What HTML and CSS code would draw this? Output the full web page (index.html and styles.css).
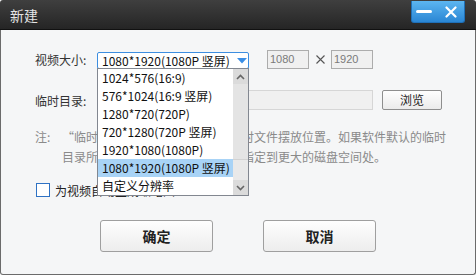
FILE: index.html
```html
<!DOCTYPE html>
<html lang="zh-CN">
<head>
<meta charset="utf-8">
<title>新建</title>
<link rel="stylesheet" href="styles.css">
</head>
<body>
<div class="win">
  <div class="titlebar">
    <span class="title">新建</span>
    <div class="ctrls">
      <span class="min"></span>
      <svg class="close" width="12" height="12" viewBox="0 0 12 12"><path d="M1.5 1.5 L10.5 10.5 M10.5 1.5 L1.5 10.5" stroke="#fff" stroke-width="2.2" stroke-linecap="round" fill="none"/></svg>
    </div>
  </div>
  <div class="body">
    <div class="row row-size">
      <span class="label">视频大小:</span>
      <div class="select-wrap">
        <div class="select">
          <span>1080*1920(1080P 竖屏)</span>
          <svg class="arrow" width="10" height="6" viewBox="0 0 10 6"><polygon points="0,0 10,0 5,5.5" fill="#3a8ee6"/></svg>
        </div>
        <div class="list">
          <div class="items">
            <div class="item">1024*576(16:9)</div>
            <div class="item">576*1024(16:9 竖屏)</div>
            <div class="item">1280*720(720P)</div>
            <div class="item">720*1280(720P 竖屏)</div>
            <div class="item">1920*1080(1080P)</div>
            <div class="item selected">1080*1920(1080P 竖屏)</div>
            <div class="item">自定义分辨率</div>
          </div>
          <div class="sb">
            <div class="sb-btn"><svg width="9" height="6" viewBox="0 0 9 6"><polyline points="1,5 4.5,1.5 8,5" stroke="#666" stroke-width="1.6" fill="none"/></svg></div>
            <div class="sb-thumb"></div>
            <div class="sb-track"></div>
            <div class="sb-btn"><svg width="9" height="6" viewBox="0 0 9 6"><polyline points="1,1 4.5,4.5 8,1" stroke="#666" stroke-width="1.6" fill="none"/></svg></div>
          </div>
        </div>
      </div>
      <span class="num">1080</span>
      <svg class="times" width="9" height="9" viewBox="0 0 9 9"><path d="M0.5 0.5 L8.5 8.5 M8.5 0.5 L0.5 8.5" stroke="#555" stroke-width="1.1" fill="none"/></svg>
      <span class="num">1920</span>
    </div>
    <div class="row row-dir">
      <span class="label">临时目录:</span>
      <span class="dir"></span>
      <button class="browse">浏览</button>
    </div>
    <div class="row note">
      <span class="note-h">注:</span>
      <div class="note-t">
        <span class="line">“临时目录”是指软件处理时的临时文件摆放位置。如果软件默认的临时</span>
        <span class="line">目录所在磁盘空间不足，建议将其指定到更大的磁盘空间处。</span>
      </div>
    </div>
    <div class="row check">
      <span class="box"></span>
      <span class="check-l">为视频自动生成缩略图</span>
    </div>
    <div class="actions">
      <button class="btn">确定</button>
      <button class="btn">取消</button>
    </div>
  </div>
</div>
</body>
</html>
```
FILE: styles.css
```css
html, body {
  margin: 0;
  padding: 0;
}
body {
  width: 476px;
  height: 275px;
  overflow: hidden;
  font-family: "Noto Sans CJK SC", sans-serif;
  font-size: 12px;
  color: #333;
  background: #ffffff;
}
.win {
  width: 476px;
  height: 275px;
  display: flex;
  flex-direction: column;
}
.titlebar {
  height: 29px;
  flex: none;
  background: linear-gradient(#3f3f3f, #252525);
  border-bottom: 1px solid #111;
  border-radius: 3px 3px 0 0;
  display: flex;
  justify-content: space-between;
  align-items: flex-start;
  padding: 0 11px 0 10px;
}
.title {
  color: #e4e4e4;
  font-size: 14px;
  line-height: 30px;
}
.ctrls {
  margin-top: 1px;
  width: 54px;
  height: 22px;
  box-sizing: border-box;
  background: linear-gradient(#5cb6f1, #2a86d4);
  border: 1px solid #1f70b8;
  border-top: none;
  border-radius: 0 0 3px 3px;
  display: flex;
  align-items: center;
  padding-left: 4px;
}
.min {
  width: 16px;
  height: 3px;
  background: #fff;
  border-radius: 2px;
  margin-right: 13px;
  margin-top: -1px;
}
.close {
  margin-top: 1px;
}
.body {
  flex: 1;
  background: #f5f6f7;
  border: 1px solid #6b6b6b;
  border-top: none;
  border-radius: 0 0 3px 3px;
  padding-top: 20px;
}
.row {
  display: flex;
  align-items: center;
  padding-left: 34px;
}
.label {
  width: 62px;
  flex: none;
  color: #333;
}
.row-size {
  height: 19px;
}
.select-wrap {
  position: relative;
  width: 152px;
  height: 17px;
  align-self: flex-end;
  flex: none;
}
.select {
  box-sizing: border-box;
  height: 17px;
  border: 1px solid #3d8ee0;
  border-radius: 2px;
  background: #fff;
  padding-left: 4px;
  display: flex;
  align-items: center;
  color: #111;
  white-space: nowrap;
}
.arrow {
  margin-left: auto;
  margin-right: 1px;
}
.list {
  position: absolute;
  left: 0;
  top: 16px;
  width: 152px;
  height: 128px;
  box-sizing: border-box;
  border: 1px solid #828790;
  background: #fff;
  display: flex;
  z-index: 5;
}
.items {
  flex: 1;
}
.item {
  height: 18px;
  line-height: 18px;
  padding-left: 4px;
  color: #111;
  white-space: nowrap;
}
.item.selected {
  background: #a8d3f6;
}
.sb {
  width: 15px;
  display: flex;
  flex-direction: column;
  background: #e9e9e9;
}
.sb-btn {
  height: 15px;
  flex: none;
  background: #dbdbdb;
  display: flex;
  align-items: center;
  justify-content: center;
}
.sb-thumb {
  height: 75px;
  background: #e4e4e4;
  border-bottom: 1px solid #d2d2d2;
}
.sb-track {
  flex: 1;
}
.num {
  margin-left: 18px;
  width: 42px;
  height: 19px;
  box-sizing: border-box;
  border: 1px solid #acacac;
  background: #f0f0f0;
  color: #7a7a7a;
  font-family: "Liberation Sans", sans-serif;
  font-size: 11px;
  line-height: 17px;
  padding-left: 2px;
  flex: none;
}
.times {
  margin: 0 6px 0 7px;
  flex: none;
}
.times + .num {
  margin-left: 0;
}
.row-dir {
  margin-top: 21px;
  height: 20px;
}
.dir {
  width: 276px;
  height: 20px;
  box-sizing: border-box;
  border: 1px solid #d6d6d6;
  background: #f0f0f0;
  flex: none;
}
.browse {
  margin-left: 9px;
  width: 60px;
  height: 20px;
  padding: 0;
  box-sizing: border-box;
  border: 1px solid #8e8e8e;
  border-radius: 2px;
  background: linear-gradient(#fefefe, #ebebeb);
  font-family: "Noto Sans CJK SC", sans-serif;
  font-size: 12px;
  color: #222;
  line-height: 18px;
}
.note {
  margin-top: 17px;
  align-items: flex-start;
  color: #8a8a8a;
}
.note-h {
  width: 27px;
  line-height: 20px;
  flex: none;
}
.note-t {
  display: flex;
  flex-direction: column;
}
.line {
  line-height: 20px;
  white-space: nowrap;
}
.check {
  margin-top: 16px;
  height: 14px;
}
.box {
  width: 14px;
  height: 14px;
  box-sizing: border-box;
  border: 1px solid #2f72c4;
  background: #fff;
  margin-left: 1px;
  flex: none;
}
.check-l {
  margin-left: 5px;
  color: #222;
}
.actions {
  margin-top: 23px;
  display: flex;
  justify-content: center;
  gap: 50px;
}
.btn {
  width: 113px;
  height: 32px;
  padding: 0;
  box-sizing: border-box;
  border: 1px solid #9f9f9f;
  border-radius: 3px;
  background: linear-gradient(#fefefe, #ededed);
  font-family: "Noto Sans CJK SC", sans-serif;
  font-size: 14px;
  font-weight: bold;
  color: #222;
}
```
